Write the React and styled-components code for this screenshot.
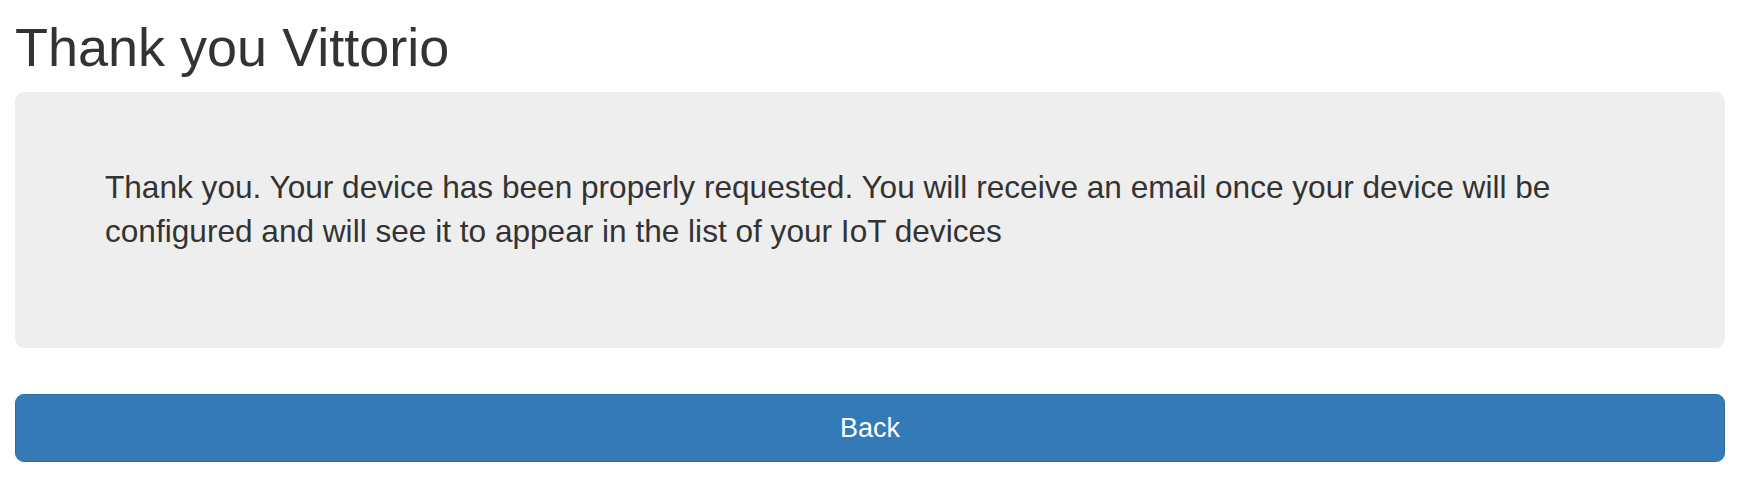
import React from 'react';
import styled, { createGlobalStyle } from 'styled-components';

const GlobalStyle = createGlobalStyle`
    html, body {
        margin: 0;
        padding: 0;
        background: #fff;
    }
    body {
        font-family: "Liberation Sans", Arial, Helvetica, sans-serif;
        color: #333;
    }
`;

const Page = styled.div`
    padding: 0 15px;
    display: flex;
    flex-direction: column;
`;

const Title = styled.h1`
    margin: 18px 0 15px 0;
    font-size: 54px;
    font-weight: 400;
    line-height: 1.1;
    color: #333;
`;

const Jumbotron = styled.div`
    background: #eee;
    border-radius: 9px;
    padding: 73px 90px;
    margin-bottom: 46px;
`;

const Message = styled.p`
    margin: 0 0 22px 0;
    font-size: 31.6px;
    line-height: 44px;
    color: #333;
`;

const BackButton = styled.button`
    display: block;
    width: 100%;
    box-sizing: border-box;
    padding: 16px 24px;
    font-family: inherit;
    font-size: 27px;
    line-height: 34px;
    color: #fff;
    background: #337ab7;
    border: 1px solid #2e6da4;
    border-radius: 9px;
    cursor: pointer;
`;

export default function App() {
    return (
        <>
        <GlobalStyle />
        <Page>
            <Title>Thank you Vittorio</Title>
            <Jumbotron>
                <Message>
                    Thank you. Your device has been properly requested. You will receive an email once your device will be configured and will see it to appear in the list of your IoT devices
                </Message>
            </Jumbotron>
            <BackButton>Back</BackButton>
        </Page>
        </>
    );
}
